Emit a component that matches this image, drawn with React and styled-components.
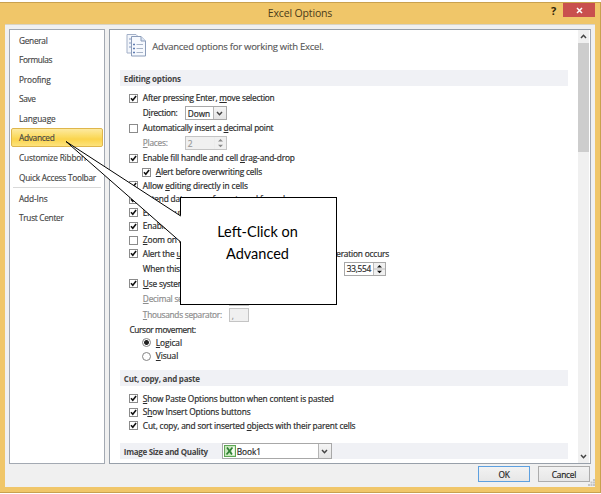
import React from 'react';
import styled, { createGlobalStyle, css } from 'styled-components';

const Global = createGlobalStyle`
  * { box-sizing: border-box; }
  body { margin: 0; background: #fff; font-family: "Open Sans", "Noto Sans", sans-serif; font-size: 8.3px; color: #2b2b2b; overflow: hidden; }
`;

const Page = styled.div`
  width: 601px;
  height: 494px;
  padding-top: 2px;
`;

const Window = styled.div`
  position: relative;
  width: 601px;
  height: 491px;
  display: flex;
  flex-direction: column;
  background: #f0c669;
  border: solid #c9a14f;
  border-width: 1px 1px 1px 0;
  padding: 0 5px 5px 5px;
`;

const TitleBar = styled.div`
  height: 21px;
  display: grid;
  grid-template-columns: 1fr 17px 32px;
  align-items: start;
`;

const Title = styled.div`
  padding-left: 49px;
  text-align: center;
  font-size: 10.5px;
  line-height: 21px;
  letter-spacing: -0.15px;
  color: #4a3b1a;
`;

const HelpButton = styled.div`
  padding-left: 5px;
  font-size: 11px;
  font-weight: 700;
  line-height: 15px;
  color: #2e2408;
`;

const CloseButton = styled.div`
  height: 14px;
  display: flex;
  align-items: center;
  justify-content: center;
  background: #c9504e;
`;

const Body = styled.div`
  flex: 1;
  display: flex;
  flex-direction: column;
  background: #f0f0f0;
  border-top: 1px solid #d9d4c4;
  padding: 4px 4px 0 4px;
`;

const Panes = styled.div`
  height: 435px;
  display: flex;
  gap: 4px;
`;

const Sidebar = styled.div`
  width: 96px;
  background: #fff;
  border: 1px solid #a3a9b2;
  padding-top: 1px;
`;

const NavItem = styled.div`
  height: ${(p) => p.$h || 19.3}px;
  display: flex;
  align-items: center;
  padding-left: 9px;
  letter-spacing: ${(p) => p.$ls}px;
  white-space: nowrap;
  -webkit-text-stroke: 0.15px;
  color: #444;
  ${(p) =>
    p.$active &&
    css`
      height: 19px;
      margin: 0 1px;
      padding-left: 7px;
      border: 1px solid #dfb64c;
      border-radius: 2px;
      background: linear-gradient(#fdeaa0, #fbdb62 45%, #fbd44d 60%, #fde37c);
    `}
`;

const NavDivider = styled.div`
  height: 1px;
  margin: 0 3px 1px;
  background: #d9d9d9;
`;

const Content = styled.div`
  width: 483px;
  display: flex;
  background: #fff;
  border: 1px solid #98a0aa;
  border-right-color: #a3a9b2;
`;

const Settings = styled.div`
  width: 458px;
  margin-right: 10px;
  padding-left: 10px;
`;

const Heading = styled.div`
  height: 40px;
  display: flex;
  align-items: flex-start;
  gap: 5.5px;
  padding: 4px 0 0 6px;
  font-size: 9.5px;
  letter-spacing: -0.25px;
  -webkit-text-stroke: 0.12px;
  color: #555;
`;

const HeadingText = styled.div`
  padding-top: 6px;
  line-height: 13px;
`;

const SectionBar = styled.div`
  height: 16px;
  display: flex;
  align-items: center;
  margin-bottom: ${(p) => p.$gap || 0}px;
  padding-left: 4px;
  background: #f0f1f5;
  font-size: 8px;
  font-weight: 700;
  letter-spacing: ${(p) => p.$ls}px;
  color: #444;
`;

const SectionName = styled.span`
  width: 98px;
  white-space: nowrap;
`;

const Row = styled.div`
  height: ${(p) => p.$h || 14}px;
  display: flex;
  align-items: center;
  padding-left: ${(p) => (p.$indent || 0) + 9}px;
  white-space: nowrap;
  color: ${(p) => (p.$disabled ? '#8d8d8d' : '#2b2b2b')};
`;

const Label = styled.span`
  letter-spacing: ${(p) => p.$ls}px;
  ${(p) => p.$w && `width: ${p.$w}px;`}
  flex: none;
  line-height: 12px;
  -webkit-text-stroke: 0.2px;
`;

const Key = styled.span`
  text-decoration: underline;
  text-decoration-thickness: 1px;
  text-underline-offset: 1px;
`;

const Box = styled.span`
  width: 9px;
  height: 9px;
  flex: none;
  display: flex;
  margin-right: 5px;
  border: 1px solid #8b8b8b;
  background: #fff;
`;

const Radio = styled.span`
  width: 9px;
  height: 9px;
  flex: none;
  margin-right: 5px;
  border: 1px solid #858585;
  border-radius: 50%;
  background: ${(p) => (p.$on ? 'radial-gradient(circle, #222 0 2px, #fff 2.9px)' : '#fff')};
`;

const Field = styled.span`
  width: ${(p) => p.$w}px;
  height: ${(p) => p.$h || 14}px;
  flex: none;
  display: flex;
  align-items: center;
  justify-content: space-between;
  padding-left: ${(p) => (p.$icon ? 1 : 2)}px;
  border: 1px solid ${(p) => (p.$disabled ? '#c4c4c4' : '#a8a8a8')};
  background: ${(p) => (p.$disabled ? '#f0f0f0' : '#fff')};
  font-size: 8.3px;
  font-weight: 400;
  -webkit-text-stroke: 0.2px;
  letter-spacing: ${(p) => p.$ls || 0}px;
  color: ${(p) => (p.$disabled ? '#999' : '#2b2b2b')};
`;

const FieldButton = styled.span`
  width: 13px;
  height: 100%;
  display: flex;
  align-items: center;
  justify-content: center;
  border-left: 1px solid #b5b5b5;
  background: linear-gradient(#f5f5f5, #e4e4e4);
`;

const SpinButtons = styled.span`
  width: 12px;
  height: 100%;
  display: flex;
  align-items: center;
  justify-content: center;
  border-left: 1px solid ${(p) => (p.$disabled ? '#ececec' : '#bdbdbd')};
  background: #f0f0f0;
`;

const BookName = styled.span`
  flex: 1;
  padding-left: 1px;
`;

const Scrollbar = styled.div`
  width: 11px;
  display: flex;
  flex-direction: column;
  align-items: center;
  background: #f0f0f0;
`;

const ScrollArrow = styled.div`
  height: 13px;
  display: flex;
  align-items: center;
`;

const ScrollThumb = styled.div`
  width: 11px;
  height: 109px;
  margin-bottom: auto;
  background: #cdcdcd;
`;

const Footer = styled.div`
  flex: 1;
  display: flex;
  justify-content: flex-end;
  gap: 8px;
  padding: 2px 1px 0 0;
`;

const Button = styled.div`
  width: 52px;
  height: 16px;
  display: flex;
  align-items: center;
  justify-content: center;
  border: 1px solid ${(p) => (p.$primary ? '#5da0e0' : '#acacac')};
  background: linear-gradient(#f2f2f2, #e7e7e7);
  letter-spacing: -0.2px;
  -webkit-text-stroke: 0.2px;
  color: #1f1f1f;
`;

const Grip = styled.svg`
  position: absolute;
  right: 5px;
  bottom: 6px;
`;

const CalloutBox = styled.div`
  position: absolute;
  left: 180px;
  top: 194px;
  width: 157px;
  height: 108px;
  padding: 23px 2px 0 0;
  border: 1.5px solid #000;
  background: #fff;
  text-align: center;
  font: 14.5px/22px Lato, "Open Sans", sans-serif;
  color: #000;
`;

const CalloutTail = styled.svg`
  position: absolute;
  left: 60px;
  top: 132px;
`;

const Chevron = ({ up, color = '#444' }) => (
  <svg width="7" height="5" viewBox="0 0 7 5">
    <path d={up ? 'M1 4L3.5 1.3L6 4' : 'M1 1L3.5 3.7L6 1'} fill="none" stroke={color} strokeWidth="1.5" />
  </svg>
);

const Spin = ({ disabled }) => (
  <SpinButtons $disabled={disabled}>
    <svg width="11" height="12" viewBox="0 0 11 12">
      {!disabled && <path d="M0 6H11" stroke="#bdbdbd" />}
      <path d="M3 4.5L5.5 2L8 4.5ZM3 7.7L5.5 10.2L8 7.7Z" fill={disabled ? '#8a8a8a' : '#111'} />
    </svg>
  </SpinButtons>
);

const Checkbox = ({ on }) => (
  <Box>
    {on && (
      <svg width="7" height="7" viewBox="0 0 7 7">
        <path d="M1 3.2L2.8 5.2L6.1 1.1" fill="none" stroke="#111" strokeWidth="1.6" />
      </svg>
    )}
  </Box>
);

/* An underscore in the text marks the access key that follows it. */
const Text = ({ children, ls, w }) => {
  const i = children.indexOf('_');
  if (i < 0) return <Label $ls={ls} $w={w}>{children}</Label>;
  return (
    <Label $ls={ls} $w={w}>
      {children.slice(0, i)}
      <Key>{children[i + 1]}</Key>
      {children.slice(i + 2)}
    </Label>
  );
};

const Check = ({ text, ls, on = true, h, indent }) => (
  <Row $h={h} $indent={indent}>
    <Checkbox on={on} />
    <Text ls={ls}>{text}</Text>
  </Row>
);

const PagesIcon = () => (
  <svg width="21" height="23" viewBox="0 0 21 23">
    <path d="M1 .5H10L12.5 3V19H1Z" fill="#f3f6fb" stroke="#a3b0c8" />
    <path d="M3 5H5M3 9H5M3 13H5" stroke="#8398be" />
    <path d="M5.5 2.5H15L19.5 7V22H5.5Z" fill="#f6f9fe" stroke="#8b9cb9" />
    <path d="M15 2.5V7H19.5" fill="#dde6f4" stroke="#8b9cb9" />
    <path d="M7 10.5H9M7 14.5H9M7 18.5H9" stroke="#5f7db3" strokeWidth="1.4" />
    <path d="M10.5 10.5H17M10.5 14.5H17M10.5 18.5H17" stroke="#a8b4c8" />
  </svg>
);

const BookIcon = () => (
  <svg width="12" height="12" viewBox="0 0 12 12">
    <rect x=".5" y=".5" width="11" height="11" fill="#c9e8bd" stroke="#5fa655" />
    <path d="M8 2H10.5V10H8Z" fill="#f4fbf1" />
    <path d="M3 2.5L8 9.5M8.5 2.5L2.5 9.5" stroke="#2f8033" strokeWidth="1.7" />
  </svg>
);

export default function App() {
  return (
    <Page>
      <Global />
      <Window>
        <TitleBar>
          <Title>Excel Options</Title>
          <HelpButton>?</HelpButton>
          <CloseButton>
            <svg width="7" height="7" viewBox="0 0 7 7">
              <path d="M1 1L6 6M6 1L1 6" stroke="#fff" strokeWidth="1.5" />
            </svg>
          </CloseButton>
        </TitleBar>
        <Body>
          <Panes>
            <Sidebar>
              <NavItem $ls={-0.3}>General</NavItem>
              <NavItem $ls={-0.38}>Formulas</NavItem>
              <NavItem $ls={-0.16}>Proofing</NavItem>
              <NavItem $ls={-0.37}>Save</NavItem>
              <NavItem $ls={-0.1} $h={19.8}>Language</NavItem>
              <NavItem $ls={-0.3} $active>Advanced</NavItem>
              <NavItem $ls={-0.2} $h={22}>Customize Ribbon</NavItem>
              <NavItem $ls={-0.24} $h={18}>Quick Access Toolbar</NavItem>
              <NavDivider />
              <NavItem $ls={-0.13}>Add-Ins</NavItem>
              <NavItem $ls={-0.3}>Trust Center</NavItem>
            </Sidebar>
            <Content>
              <Settings>
                <Heading>
                  <PagesIcon />
                  <HeadingText>Advanced options for working with Excel.</HeadingText>
                </Heading>
                <SectionBar $gap={5} $ls={-0.19}>Editing options</SectionBar>
                <Check text="After pressing Enter, _move selection" ls={-0.21} />
                <Row $h={16} $indent={14}>
                  <Text ls={-0.3} w={42}>D_irection:</Text>
                  <Field $w={42} $ls={-0.1}>
                    Down
                    <FieldButton><Chevron /></FieldButton>
                  </Field>
                </Row>
                <Check text="Automatically insert a _decimal point" ls={-0.22} on={false} />
                <Row $h={16} $indent={14} $disabled>
                  <Text ls={-0.25} w={42}>_Places:</Text>
                  <Field $w={42} $disabled>
                    2
                    <Spin disabled />
                  </Field>
                </Row>
                <Check text="Enable fill handle and cell _drag-and-drop" ls={-0.11} />
                <Check text="_Alert before overwriting cells" ls={-0.16} indent={13} />
                <Check text="Allow _editing directly in cells" ls={-0.11} h={13} />
                <Check text="E_xtend data range formats and formulas" ls={-0.17} />
                <Check text="Enable automatic _percent entry" ls={-0.17} h={13} />
                <Check text="Enable AutoComplete for cell values" ls={-0.17} />
                <Check text="_Zoom on roll with IntelliMouse" ls={-0.1} on={false} />
                <Check text="Alert the _user when a potentially time consuming operation occurs" ls={-0.17} h={13} />
                <Row $h={17} $indent={14}>
                  <Text ls={-0.2} w={201}>When this _number of cells (in thousands) is affected:</Text>
                  <Field $w={42} $ls={-0.3}>
                    33,554
                    <Spin />
                  </Field>
                </Row>
                <Check text="_Use system separators" ls={-0.17} h={13} />
                <Row $h={17} $indent={14} $disabled>
                  <Text ls={-0.22} w={86}>_Decimal separator:</Text>
                  <Field $w={20} $disabled>.</Field>
                </Row>
                <Row $h={16} $indent={14} $disabled>
                  <Text ls={-0.27} w={86}>_Thousands separator:</Text>
                  <Field $w={20} $disabled>,</Field>
                </Row>
                <Row $h={13} $indent={0.6}>
                  <Text ls={-0.36}>Cursor movement:</Text>
                </Row>
                <Row $h={13} $indent={13}>
                  <Radio $on />
                  <Text ls={-0.08}>_Logical</Text>
                </Row>
                <Row $h={14} $indent={13}>
                  <Radio />
                  <Text ls={-0.08}>_Visual</Text>
                </Row>
                <Row $h={7} />
                <SectionBar $gap={6} $ls={-0.23}>Cut, copy, and paste</SectionBar>
                <Check text="_Show Paste Options button when content is pasted" ls={-0.14} h={13} />
                <Check text="S_how Insert Options buttons" ls={-0.11} />
                <Check text="Cut, copy, and sort inserted _objects with their parent cells" ls={-0.16} h={13} />
                <Row $h={11} />
                <SectionBar $ls={-0.31}>
                  <SectionName>Image Size and Quality</SectionName>
                  <Field $w={110} $h={16} $ls={-0.08} $icon>
                    <BookIcon />
                    <BookName>Book1</BookName>
                    <FieldButton><Chevron /></FieldButton>
                  </Field>
                </SectionBar>
              </Settings>
              <Scrollbar>
                <ScrollArrow><Chevron up /></ScrollArrow>
                <ScrollThumb />
                <ScrollArrow><Chevron /></ScrollArrow>
              </Scrollbar>
            </Content>
          </Panes>
          <Footer>
            <Button $primary>OK</Button>
            <Button>Cancel</Button>
          </Footer>
        </Body>
        <Grip width="7" height="7" viewBox="0 0 7 7">
          <path d="M5 0h2v2h-2zM5 2.5h2v2h-2zM2.5 2.5h2v2h-2zM5 5h2v2h-2zM2.5 5h2v2h-2zM0 5h2v2h-2z" fill="#c4c4c4" />
        </Grip>
        <CalloutBox>
          Left-Click on
          <br />
          Advanced
        </CalloutBox>
        <CalloutTail width="122" height="112" viewBox="0 0 122 112">
          <path d="M121 81L6 6.5L121 107Z" fill="#fff" />
          <path d="M120.7 81L6 6.5L120.7 107" fill="none" stroke="#000" />
        </CalloutTail>
      </Window>
    </Page>
  );
}
